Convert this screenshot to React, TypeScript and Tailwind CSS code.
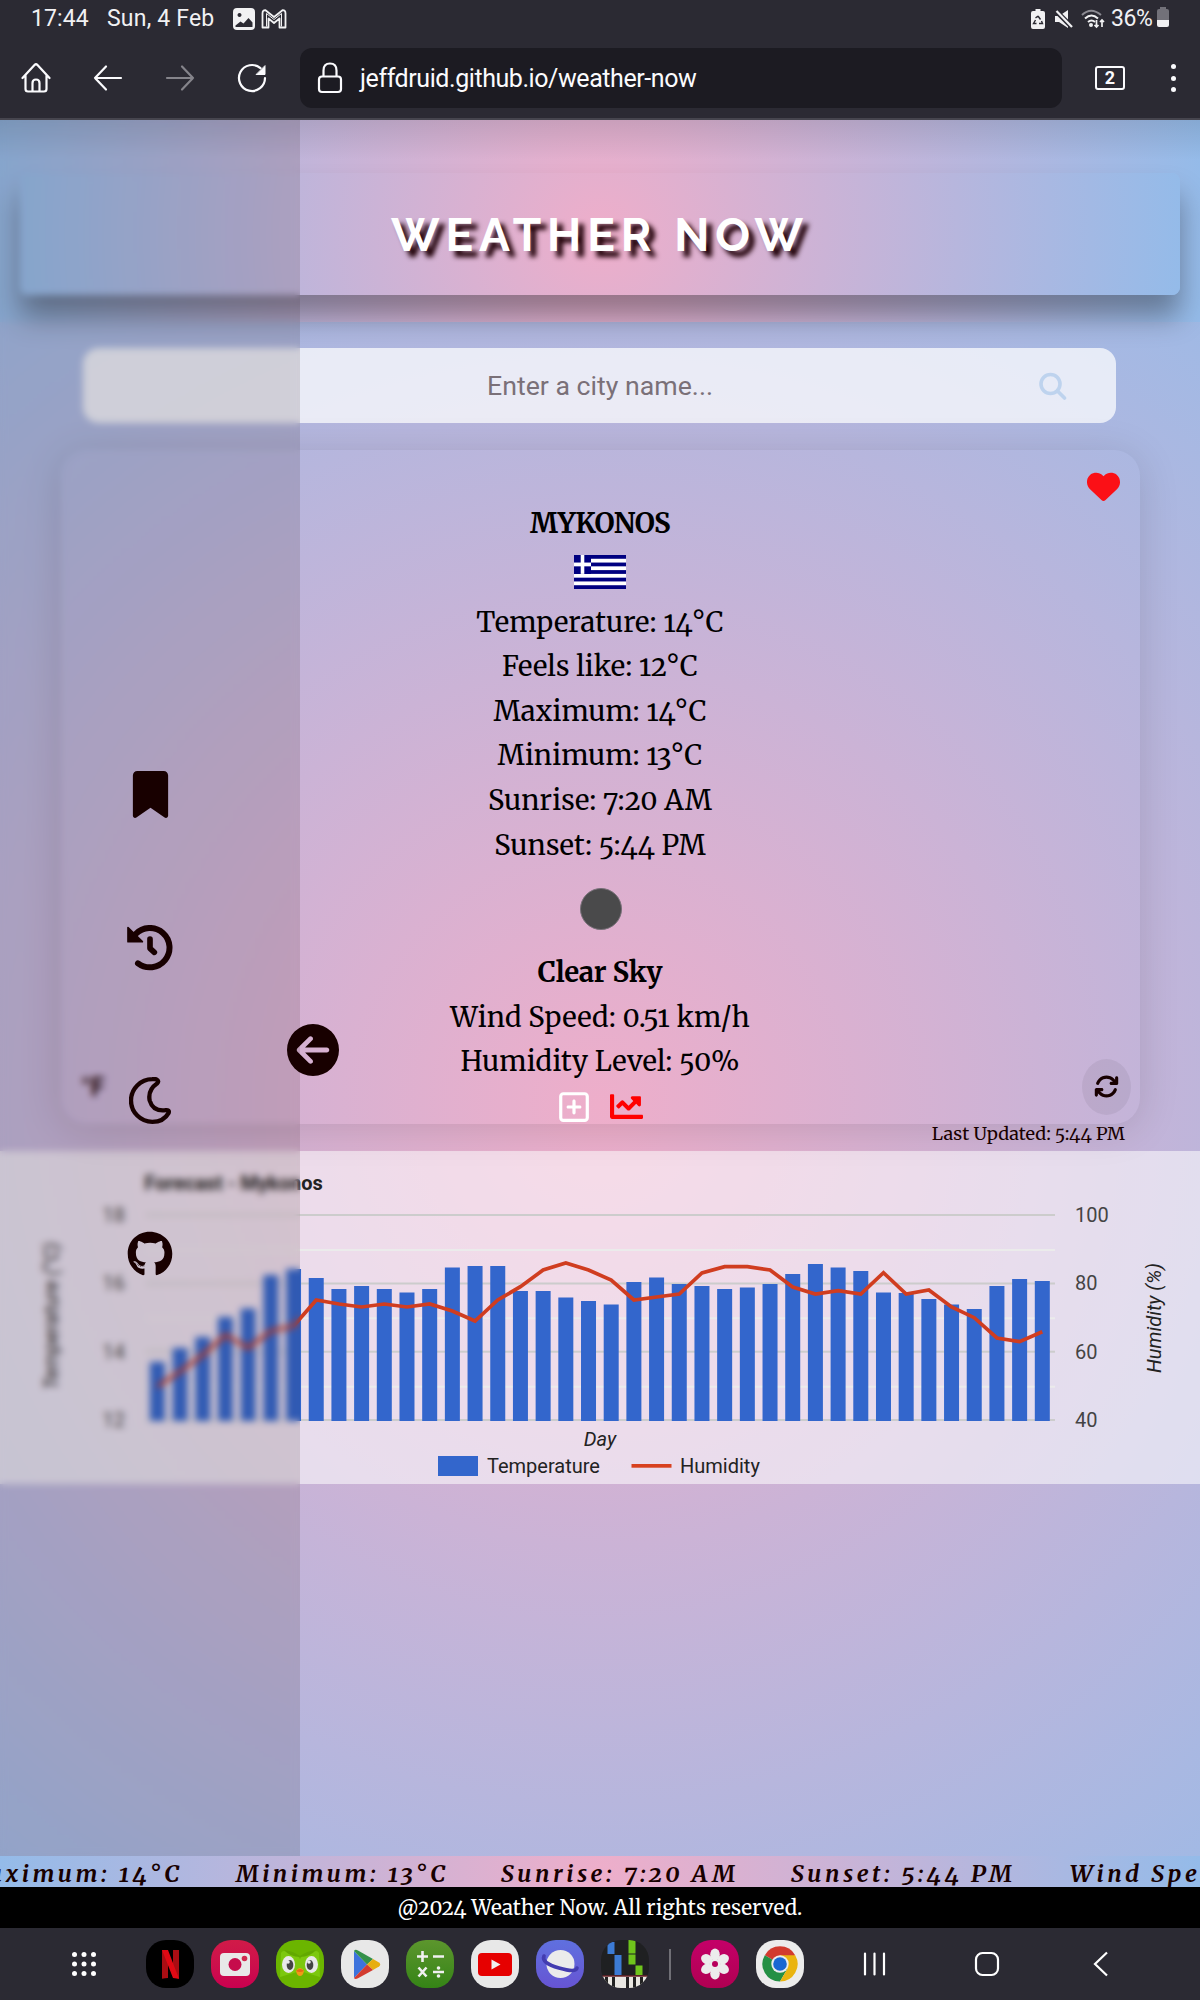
import React from "react";
import { FaArrowsRotate, FaBookmark, FaCircleArrowLeft, FaGithub, FaHeart, FaRegSquarePlus } from "react-icons/fa6";
import { FaChartLine } from "react-icons/fa";

const temperatureTops = [
  1362, 1348, 1337, 1317, 1308.5, 1275, 1269, 1278, 1289, 1286, 1289, 1292.5, 1289, 1267.5, 1266, 1266, 1291, 1291,
  1297.5, 1301, 1304.5, 1282, 1277.5, 1284, 1286, 1289, 1287.5, 1284, 1274, 1264, 1267.5, 1271, 1292.5, 1293, 1299,
  1304.5, 1309, 1286, 1279, 1281,
];

const humidityPoints = [
  1386.5, 1371.5, 1355, 1335, 1348, 1331, 1326, 1300, 1304, 1307, 1304, 1307, 1304, 1311, 1321, 1300, 1286.7, 1270,
  1263, 1270, 1280, 1300, 1297, 1294, 1273, 1266.7, 1266.7, 1270, 1287, 1294, 1290.7, 1294, 1272.7, 1294, 1290, 1307,
  1317.7, 1338, 1341.7, 1331.7,
];

const barX = (i: number) => 157.4 + i * 22.69;

function StatusBar() {
  return (
    <div className="flex h-9 items-center justify-between pt-[1px] pr-[31px] pl-[31px] font-['Roboto'] text-[23px] leading-9 text-[#f1f1f3]">
      <div className="flex items-center">
        <span className="w-[76px] tracking-[0.1px]">17:44</span>
        <span className="w-[126px] tracking-[0.2px]">Sun, 4 Feb</span>
        <svg width="22" height="22" viewBox="0 0 22 22">
          <path
            fillRule="evenodd"
            fill="#f1f1f3"
            d="M4 0h14a4 4 0 0 1 4 4v14a4 4 0 0 1-4 4H4a4 4 0 0 1-4-4V4a4 4 0 0 1 4-4zM6.500 5a2 2 0 1 0 .01 0zM2.500 17.500l5-4 3 2 5-5.500 4 4.500v4.500h-17z"
          />
        </svg>
        <svg width="26" height="20" viewBox="0 0 26 20" className="ml-[6px]" fill="none" stroke="#f1f1f3" strokeWidth="1.800">
          <path d="M1.500 4.500Q1.500 1 4.500 1.200L13 8l8.500-6.800Q24.500 1 24.500 4.500V18.500H18.500V9.500L13 14 7.500 9.500v9H1.500z" strokeLinejoin="round" />
          <path d="M5.500 4.500v13M20.500 4.500v13M5.500 4.500l7.500 6 7.500-6" strokeWidth="1" />
        </svg>
      </div>
      <div className="flex items-center">
        <svg width="14" height="20" viewBox="0 0 14 20" className="mr-[10px]">
          <path fill="#f1f1f3" d="M4.500 0h5v2H12a2 2 0 0 1 2 2v14a2 2 0 0 1-2 2H2a2 2 0 0 1-2-2V4a2 2 0 0 1 2-2h2.500z" />
          <path d="M7 7l2.500 3.500M10.500 12l1 2.500H8M5.500 14.500h-3L4.500 11M4.500 9L7 7" fill="none" stroke="#2b2a33" strokeWidth="1.400" />
        </svg>
        <svg width="18" height="18" viewBox="0 0 18 18" className="mr-[8px]">
          <path fill="#f1f1f3" d="M0 6h4l9-6v18l-9-6H0z" />
          <path d="M0 0l17 17" stroke="#2b2a33" strokeWidth="5" />
          <path d="M1.500 1l15.500 16" stroke="#f1f1f3" strokeWidth="2.200" />
        </svg>
        <svg width="25" height="20" viewBox="0 0 25 20" className="mr-[5px]" fill="none" stroke="#f1f1f3" strokeWidth="2">
          <path d="M1 6q9-8.500 19 0" stroke="#8b8a92" />
          <path d="M4 9.500q6.500-6 13 0M7 13q3.500-3 7 0" />
          <circle cx="10" cy="16" r="1" />
          <path d="M15.500 11v7m-2-2l2 2 2-2M21 18v-7m-2 2l2-2 2 2" strokeWidth="1.700" />
        </svg>
        <span className="w-[46px] tracking-[-0.4px]">36%</span>
        <svg width="12" height="20" viewBox="0 0 12 20" className="-mt-[3px]">
          <path fill="#727179" d="M3 0h6v2h1a2 2 0 0 1 2 2v9H0V4a2 2 0 0 1 2-2h1z" />
          <path fill="#f1f1f3" d="M0 13h12v5a2 2 0 0 1-2 2H2a2 2 0 0 1-2-2z" />
        </svg>
      </div>
    </div>
  );
}

function BrowserBar() {
  return (
    <div className="flex h-[84px] items-center border-b-2 border-[#46454e] pt-[2px]">
      <div className="flex w-[300px] items-center pl-[21px]">
        <svg width="30" height="32" viewBox="0 0 30 32" fill="none" stroke="#fbfbfe" strokeWidth="2.200" strokeLinejoin="round" strokeLinecap="round">
          <path d="M1.500 16L13.500 3q1.500-1.500 3 0L28.500 16M4.500 13v14q0 2.500 2.500 2.500h16q2.500 0 2.500-2.500V13M11.500 29.500V21q0-3.500 3.500-3.500t3.500 3.500v8.500" />
        </svg>
        <svg width="30" height="28" viewBox="0 0 30 28" className="ml-[42px]" fill="none" stroke="#fbfbfe" strokeWidth="2.200" strokeLinecap="round" strokeLinejoin="round">
          <path d="M28 14H2M13 2.500L2 14l11 11.500" />
        </svg>
        <svg width="30" height="28" viewBox="0 0 30 28" className="ml-[42px]" fill="none" stroke="#85848b" strokeWidth="2.200" strokeLinecap="round" strokeLinejoin="round">
          <path d="M2 14h26M17 2.500L28 14 17 25.500" />
        </svg>
        <svg width="30" height="30" viewBox="0 0 30 30" className="ml-[42px]" fill="none" stroke="#fbfbfe" strokeWidth="2.200" strokeLinecap="round">
          <path d="M28 15A13 13 0 1 1 23.500 5.200" />
          <path d="M28 3v8.500h-8.500z" fill="#fbfbfe" strokeWidth="1" />
        </svg>
      </div>
      <div className="flex h-[60px] w-[762px] items-center rounded-xl bg-[#1c1b22] pl-[17px]">
        <svg width="26" height="32" viewBox="0 0 26 32" fill="none" stroke="#fbfbfe" strokeWidth="2.200">
          <rect x="2" y="14.500" width="22" height="15.500" rx="3" />
          <path d="M6.500 14.500V8.500q0-7 6.500-7t6.500 7v6" />
        </svg>
        <span className="mt-[1px] ml-[17px] font-['Roboto'] text-[25px] leading-none tracking-[-0.43px] text-[#fbfbfe]">
          jeffdruid.github.io/weather-now
        </span>
      </div>
      <div className="ml-[33px] flex h-6 w-[30px] items-center justify-center rounded-[3px] border-2 border-[#fbfbfe] font-['Roboto'] text-[18px] leading-none font-bold text-[#fbfbfe]">
        2
      </div>
      <div className="ml-[46px] flex flex-col gap-[6.500px]">
        <span className="size-[5px] rounded-full bg-[#fbfbfe]" />
        <span className="size-[5px] rounded-full bg-[#fbfbfe]" />
        <span className="size-[5px] rounded-full bg-[#fbfbfe]" />
      </div>
    </div>
  );
}

function Flag() {
  const h = 34 / 9;
  return (
    <svg width="52" height="34" viewBox="0 0 52 34">
      <rect width="52" height="34" fill="#fff" />
      {[0, 2, 4, 6, 8].map((i) => (
        <rect key={i} y={i * h} width="52" height={h} fill="#000080" />
      ))}
      <rect width="17" height={h * 5} fill="#000080" />
      <rect x="6.700" width="3.600" height={h * 5} fill="#fff" />
      <rect y={h * 2} width="17" height={h} fill="#fff" />
    </svg>
  );
}

function Line({ children, spacing = "tracking-[0.12px]" }: { children: React.ReactNode; spacing?: string }) {
  return <p className={`h-[44.6px] text-[27.500px] leading-[44.6px] whitespace-nowrap ${spacing}`}>{children}</p>;
}

function Degrees({ value }: { value: number }) {
  return (
    <>
      {value}
      <span className="-ml-[0.5px] mr-[0.5px]">°</span>C
    </>
  );
}

function WeatherCard() {
  return (
    <div className="relative mt-[27px] ml-[61px] flex h-[674px] w-[1079px] flex-col items-center rounded-[26px] pt-[52px] pr-[1px] font-['Merriweather','DejaVu_Serif_Condensed',serif] text-black oldstyle-nums shadow-[0_5px_40px_rgba(0,0,0,0.13)]">
      <Line spacing="font-bold tracking-[-0.6px]">MYKONOS</Line>
      <div className="mt-[8px] mb-[12px] h-[34px]">
        <Flag />
      </div>
      <Line>Temperature: <Degrees value={14} /></Line>
      <Line>Feels like: <Degrees value={12} /></Line>
      <Line>Maximum: <Degrees value={14} /></Line>
      <Line>Minimum: <Degrees value={13} /></Line>
      <Line>Sunrise: 7:20 AM</Line>
      <Line>Sunset: 5:44 PM</Line>
      <div className="mt-[20px] mb-[21px] ml-[1px] size-[42px] rounded-full border border-[#777078] bg-[#4a4a4b]" />
      <Line spacing="font-bold tracking-[-0.3px]">Clear Sky</Line>
      <Line>Wind Speed: 0.51 km/h</Line>
      <Line>Humidity Level: 50%</Line>
      <div className="mt-[5px] flex items-center gap-[19px]">
        <FaRegSquarePlus size={34} color="#fff" />
        <FaChartLine size={33} color="#f00" />
      </div>
      <FaHeart size={33} color="#fb1016" className="absolute top-[20px] right-[20px]" />
      <span className="absolute bottom-[20px] left-[20px] font-['Roboto'] text-[25px] leading-8 font-bold text-[#180000]">°F</span>
      <div className="absolute right-[9px] bottom-[9px] flex h-[56px] w-[49px] items-center justify-center rounded-[50%] bg-black/[0.06] pr-[1px] pb-[2px]">
        <FaArrowsRotate size={25} color="#180000" />
      </div>
      <span className="absolute top-[672px] right-[15px] text-[18.100px] leading-[24px] whitespace-nowrap text-[#180000]">
        Last Updated: 5:44 PM
      </span>
    </div>
  );
}

function ForecastChart() {
  return (
    <div className="mt-[27px] h-[333px] bg-white/55">
      <svg width="1200" height="333" viewBox="0 1151 1200 333" className="block font-['Roboto']" fontSize="20">
        {[1215, 1283.5, 1351.7, 1420].map((y) => (
          <rect key={y} x="146" y={y - 1} width="909" height="2" fill="#ccc" />
        ))}
        {[1250, 1318.3, 1386.7].map((y) => (
          <rect key={y} x="146" y={y - 1} width="909" height="2" fill="#ebebeb" />
        ))}
        {temperatureTops.map((top, i) => (
          <rect key={i} x={barX(i) - 7.5} y={top} width="15" height={1421 - top} fill="#3366cc" />
        ))}
        <polyline points={humidityPoints.map((y, i) => `${barX(i)},${y}`).join(" ")} fill="none" stroke="#d03d20" strokeWidth="3.700" />
        <text x="144.500" y="1190" fontWeight="700" fontSize="20" fill="#222">Forecast - Mykonos</text>
        {["18", "16", "14", "12"].map((t, i) => (
          <text key={t} x="125" y={1222 + i * 68.3} textAnchor="end" fill="#444">{t}</text>
        ))}
        {["100", "80", "60", "40"].map((t, i) => (
          <text key={t} x="1075" y={1222 + i * 68.3} fill="#444">{t}</text>
        ))}
        <text x="600" y="1446" textAnchor="middle" fontStyle="italic" fill="#222">Day</text>
        <text transform="translate(58 1316) rotate(-90)" textAnchor="middle" fontStyle="italic" fill="#222">Temperature (°C)</text>
        <text transform="translate(1161 1318) rotate(-90)" textAnchor="middle" fontStyle="italic" fill="#222">Humidity (%)</text>
        <rect x="438" y="1456" width="40" height="20" fill="#3366cc" />
        <text x="487" y="1473" fill="#222">Temperature</text>
        <rect x="631.500" y="1464" width="40" height="3.700" fill="#d8411f" />
        <text x="680" y="1473" fill="#222">Humidity</text>
      </svg>
    </div>
  );
}

function HistoryIcon() {
  return (
    <svg width="46" height="46" viewBox="0 0 138 138" fill="none" stroke="#180000" strokeLinecap="round" strokeLinejoin="round">
      <path d="M26 27A59 59 0 1 1 33 115" strokeWidth="18" />
      <path d="M3 8v42h43z" strokeWidth="5" fill="#180000" />
      <path d="M69 42v28l13 12" strokeWidth="17" />
    </svg>
  );
}

function MoonIcon() {
  return (
    <svg width="42" height="47" viewBox="0 0 126 140" fill="none" stroke="#180000" strokeWidth="13" strokeLinejoin="round">
      <path d="M82 6.500Q92 12 84 19Q56 38 62 70Q72 104 110 99Q122 98 119 107Q104 134 70 134A64 64 0 1 1 70 6Q77 5 82 6.500Z" />
    </svg>
  );
}

function Sidebar() {
  return (
    <>
      <nav className="absolute inset-y-0 left-0 flex w-[300px] flex-col items-center bg-[#1e0a00]/[0.12] pt-[598px] text-[#180000] backdrop-blur-[3.5px]">
        <div className="flex h-[153px] items-center"><FaBookmark size={47} /></div>
        <div className="flex h-[153px] items-center"><HistoryIcon /></div>
        <div className="flex h-[153px] items-center"><MoonIcon /></div>
        <div className="flex h-[153px] items-center"><FaGithub size={46} /></div>
      </nav>
      <FaCircleArrowLeft size={52} color="#180000" className="absolute top-[904px] left-[287px]" />
    </>
  );
}

function Page() {
  return (
    <main className="relative isolate h-[1736px] overflow-hidden bg-[radial-gradient(circle_1140px_at_600px_985px,#eeaeca_0%,#94bbe9_100%)]">
      <header className="h-[202px] bg-[radial-gradient(circle,#eeaeca_0%,#94bbe9_100%)] px-5 pt-[53px]">
        <div className="flex h-[122px] items-center justify-center rounded-lg bg-[radial-gradient(circle,#eeaeca_0%,#94bbe9_100%)] shadow-[0_22px_28px_rgba(0,0,0,0.34)]">
          <h1 className="mt-[1px] font-['Raleway','Lato'] text-[46px] leading-none font-bold tracking-[5.900px] text-white [text-shadow:6px_6px_5px_#200008]">
            WEATHER NOW
          </h1>
        </div>
      </header>
      <div className="relative mt-[26px] mr-[84px] ml-[83px] flex h-[75px] items-center justify-center rounded-2xl bg-white/[0.72] pt-[2px] pl-[1px] font-['Roboto'] text-[26.700px] text-[#7a7078]">
        Enter a city name...
        <svg width="28" height="28" viewBox="0 0 28 28" className="absolute top-[24px] right-[49px]" fill="none" stroke="#bed3ee" strokeWidth="3.600" strokeLinecap="round">
          <circle cx="11.500" cy="12" r="9.500" />
          <path d="M18.500 19l7 7" />
        </svg>
      </div>
      <WeatherCard />
      <ForecastChart />
      <div className="absolute inset-x-0 top-0 h-10 bg-gradient-to-b from-black/10 to-transparent" />
      <Sidebar />
    </main>
  );
}

function Ticker() {
  return (
    <div className="flex h-[31px] justify-start overflow-hidden bg-[radial-gradient(circle,#eeaeca_0%,#94bbe9_100%)] font-['Merriweather','DejaVu_Serif_Condensed',serif] text-[23.500px] leading-[36px] font-bold tracking-[3.500px] whitespace-nowrap text-[#180000] italic oldstyle-nums">
      <span className="-ml-[38px] w-[274px] shrink-0">Maximum: <Degrees value={14} /></span>
      <span className="w-[265px] shrink-0">Minimum: <Degrees value={13} /></span>
      <span className="w-[290px] shrink-0">Sunrise: 7:20 AM</span>
      <span className="w-[279px] shrink-0">Sunset: 5:44 PM</span>
      <span className="shrink-0">Wind Speed: 0.51 km/h</span>
    </div>
  );
}

function AppIcon({ className, children }: { className: string; children: React.ReactNode }) {
  return (
    <div className={`size-12 shrink-0 overflow-hidden rounded-[20px] ${className}`}>
      <svg width="48" height="48" viewBox="0 0 48 48">{children}</svg>
    </div>
  );
}

function Dock() {
  return (
    <div className="flex h-[72px] items-center bg-[#2b2a33] pl-[72px]">
      <svg width="24" height="24" viewBox="0 0 24 24" fill="#fff">
        {[2.5, 12, 21.5].flatMap((x) => [2.5, 12, 21.5].map((y) => <circle key={`${x}-${y}`} cx={x} cy={y} r="2.500" />))}
      </svg>
      <div className="ml-[49.500px] flex gap-[17px]">
        <AppIcon className="bg-black">
          <path d="M16 10h6v28q-3 0-6 .700zM27 10h6v28.700q-3-.700-6-.700z" fill="#a90d13" />
          <path d="M16 10h6l11 28.700q-3-.700-6-.700z" fill="#e00914" />
        </AppIcon>
        <AppIcon className="bg-gradient-to-b from-[#d11a48] to-[#c9004f]">
          <rect x="9" y="13" width="30" height="23" rx="4" fill="#e8e8e8" />
          <circle cx="24" cy="24.500" r="6.500" fill="#c60c4c" />
          <circle cx="33.500" cy="18.500" r="2.800" fill="#d02a50" />
        </AppIcon>
        <AppIcon className="bg-[#6bb500]">
          <path d="M5 13Q7 9 13 13q8 0 11 6 3-6 11-6 6-4 8 0l1 24-20-6-20 6z" fill="#7cc80e" />
          <path d="M8 10q9 1 16 6 7-5 16-6-6 7-16 7T8 10z" fill="#62a800" />
          <ellipse cx="12.500" cy="24.500" rx="6.500" ry="8.500" fill="#e9e9e9" />
          <ellipse cx="35.500" cy="24.500" rx="6.500" ry="8.500" fill="#e9e9e9" />
          <ellipse cx="14" cy="25" rx="3.300" ry="5" fill="#444" />
          <ellipse cx="34" cy="25" rx="3.300" ry="5" fill="#444" />
          <circle cx="12" cy="22" r="1.800" fill="#e9e9e9" />
          <circle cx="33" cy="22" r="1.800" fill="#e9e9e9" />
          <path d="M20 31q4-6 8 0-1 5-4 5t-4-5z" fill="#f09a16" />
          <path d="M20 31q4 2 8 0-4-4-8 0z" fill="#e56a14" />
        </AppIcon>
        <AppIcon className="bg-[#e8e8e8]">
          <path d="M13 11v27l13-13.500z" fill="#3d73dc" />
          <path d="M13 11q1-2 4-.500L32 19l-6 5.500z" fill="#34914a" />
          <path d="M32 19l6 3.500q2.500 2 0 4L32 30l-6-5.500z" fill="#e7ae10" />
          <path d="M13 38q1 1.800 4 .300L32 30l-6-5.500z" fill="#d33c30" />
        </AppIcon>
        <AppIcon className="bg-gradient-to-b from-[#5c962d] to-[#348416]">
          <path d="M11 16.500h11M16.500 11v11M27 16.500h11M12.500 27.500l8 9M20.500 27.500l-8 9M27 32h11" stroke="#f0f0f0" strokeWidth="2.600" />
          <circle cx="32.500" cy="28" r="1.800" fill="#f0f0f0" />
          <circle cx="32.500" cy="36" r="1.800" fill="#f0f0f0" />
        </AppIcon>
        <AppIcon className="bg-[#e8e8e8]">
          <rect x="7" y="13" width="34" height="23" rx="4" fill="#e60000" />
          <path d="M20.500 19.500v10l9-5z" fill="#f0f0f0" />
        </AppIcon>
        <AppIcon className="bg-gradient-to-b from-[#5f70df] to-[#6654d3]">
          <circle cx="24.500" cy="24" r="14" fill="#ebebeb" />
          <path d="M8 16q-3 7 15 12 17 5 18 0" fill="none" stroke="#433cb0" strokeWidth="3.600" strokeLinecap="round" />
        </AppIcon>
        <AppIcon className="bg-[#1f2022]">
          <path d="M6.500 2h7v12h-7zM13.500 15h7v20h-7z" fill="#3c7bd4" />
          <path d="M27.500 0h7v13.500h-7zM27.500 14.500h7v10h-7zM34.500 25.500h7v9.500h-7z" fill="#6fc41c" />
          <path d="M0 36h48v12H0z" fill="#e9e7e2" />
          <path d="M0 36h48" stroke="#6b2328" strokeWidth="1.500" />
          <path d="M5.500 37v11M12.500 37v11M26.500 37v11M33.500 37v11M40.500 37v11" stroke="#222" strokeWidth="3" />
        </AppIcon>
      </div>
      <div className="ml-[20px] h-[31px] w-[2px] bg-[#706f76]" />
      <div className="ml-[20px] flex gap-[17px]">
        <AppIcon className="bg-gradient-to-b from-[#c40068] to-[#b00052]">
          {[0, 60, 120, 180, 240, 300].map((a) => (
            <ellipse key={a} cx="24" cy="14.500" rx="4.800" ry="6" fill="#ececec" transform={`rotate(${a} 24 24)`} />
          ))}
          <circle cx="24" cy="24" r="5.500" fill="#ececec" />
          <circle cx="24" cy="24" r="3" fill="#b8005c" />
        </AppIcon>
        <AppIcon className="bg-[#ececec]">
          <path d="M24 24L8.800 15.200A17.500 17.500 0 0 1 39.200 15.200z" fill="#d23b2f" />
          <path d="M24 24L8.800 15.200A17.500 17.500 0 0 0 24 41.500l7.600-13.100z" fill="#249044" />
          <path d="M31.600 28.400L24 41.500A17.500 17.500 0 0 0 39.200 15.200H24z" fill="#eab410" />
          <circle cx="24" cy="24" r="8.700" fill="#ececec" />
          <circle cx="24" cy="24" r="6.800" fill="#1967d2" />
        </AppIcon>
      </div>
      <svg width="24" height="24" viewBox="0 0 24 24" className="ml-[59px]" stroke="#fff" strokeWidth="2.200" strokeLinecap="round">
        <path d="M2 1.500v21M11.500 1.500v21M21 1.500v21" />
      </svg>
      <svg width="26" height="26" viewBox="0 0 26 26" className="ml-[87.500px]" fill="none" stroke="#fff" strokeWidth="2.200">
        <rect x="2" y="2" width="22" height="22" rx="6.500" />
      </svg>
      <svg width="16" height="26" viewBox="0 0 16 26" className="ml-[92.500px]" fill="none" stroke="#fff" strokeWidth="2.200">
        <path d="M14 1.500L2 13l12 11.500" />
      </svg>
    </div>
  );
}

export default function App() {
  return (
    <div className="flex h-[2000px] w-[1200px] flex-col overflow-hidden bg-[#2b2a33]">
      <StatusBar />
      <BrowserBar />
      <Page />
      <Ticker />
      <footer className="flex h-[41px] items-center justify-center bg-black pt-[1px] font-['Merriweather','DejaVu_Serif_Condensed',serif] text-[20.600px] tracking-[0.08px] whitespace-nowrap text-white oldstyle-nums">
        @2024 Weather Now. All rights reserved.
      </footer>
      <Dock />
    </div>
  );
}
